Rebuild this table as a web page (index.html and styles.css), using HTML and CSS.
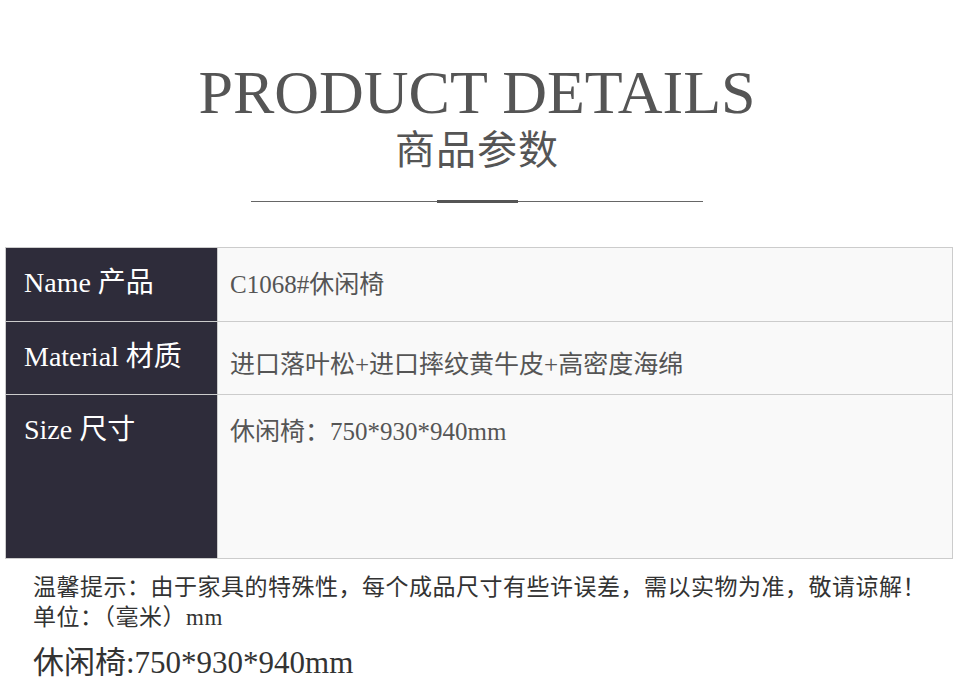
FILE: index.html
```html
<!DOCTYPE html>
<html lang="zh-CN">
<head>
  <meta charset="UTF-8" />
  <meta name="viewport" content="width=device-width, initial-scale=1.0"/>
  <title>商品参数</title>
  <link rel="stylesheet" href="styles.css">
</head>
<body>

  <div class="header">
    <h1 class="title">PRODUCT DETAILS</h1>
    <h2 class="subtitle">商品参数</h2>
    <div class="divider"></div>
  </div>

  <table class="params">
    <tr class="row-name">
      <td class="label">Name 产品</td>
      <td class="value">C1068#休闲椅</td>
    </tr>
    <tr class="row-material">
      <td class="label">Material 材质</td>
      <td class="value low">进口落叶松+进口摔纹黄牛皮+高密度海绵</td>
    </tr>
    <tr class="row-size">
      <td class="label">Size 尺寸</td>
      <td class="value">休闲椅：750*930*940mm</td>
    </tr>
  </table>

  <div class="notes">
    <p class="tip">温馨提示：由于家具的特殊性，每个成品尺寸有些许误差，需以实物为准，敬请谅解！</p>
    <p class="tip">单位：（毫米）mm</p>
    <p class="size">休闲椅:750*930*940mm</p>
  </div>

</body>
</html>
```

FILE: styles.css
```css
* {
  box-sizing: border-box;
}

body {
  margin: 0;
  background: #ffffff;
  font-family: 'Liberation Serif', 'Noto Sans CJK SC', serif;
  color: #555;
}

.header {
  padding: 61px 16px 0 0;
  display: flex;
  flex-direction: column;
  align-items: center;
}

.title {
  margin: 0;
  font-size: 62px;
  line-height: 62px;
  font-weight: normal;
  color: #555;
}

.subtitle {
  margin: 8px 0 0;
  font-size: 40px;
  line-height: 40px;
  font-weight: normal;
  letter-spacing: 1px;
  color: #555;
}

.divider {
  position: relative;
  width: 452px;
  height: 1px;
  margin-top: 30px;
  background: #666;
}

.divider::after {
  content: '';
  position: absolute;
  left: 186px;
  top: -1px;
  width: 81px;
  height: 3px;
  background: #555;
}

.params {
  margin: 45px 0 0 5px;
  width: 948px;
  border-collapse: collapse;
  border: 1px solid #ccc;
}

.params td {
  border: 1px solid #ccc;
  vertical-align: top;
  line-height: 30px;
}

.label {
  width: 212px;
  padding: 20px 0 0 18px;
  background: #2e2c3a;
  color: #fff;
  font-size: 28px;
}

.value {
  padding: 22px 0 0 12px;
  background: #f9f9f9;
  color: #555;
  font-size: 25px;
}

.value.low {
  padding-top: 28px;
}

.row-name td {
  height: 74px;
}

.row-material td {
  height: 73px;
}

.row-size td {
  height: 164px;
}

.notes {
  margin-top: 14px;
  padding-left: 33px;
  color: #333;
}

.tip {
  margin: 0;
  font-size: 23px;
  line-height: 30px;
  letter-spacing: 0.5px;
}

.size {
  margin: 10px 0 0;
  font-size: 31px;
  line-height: 40px;
}
```
